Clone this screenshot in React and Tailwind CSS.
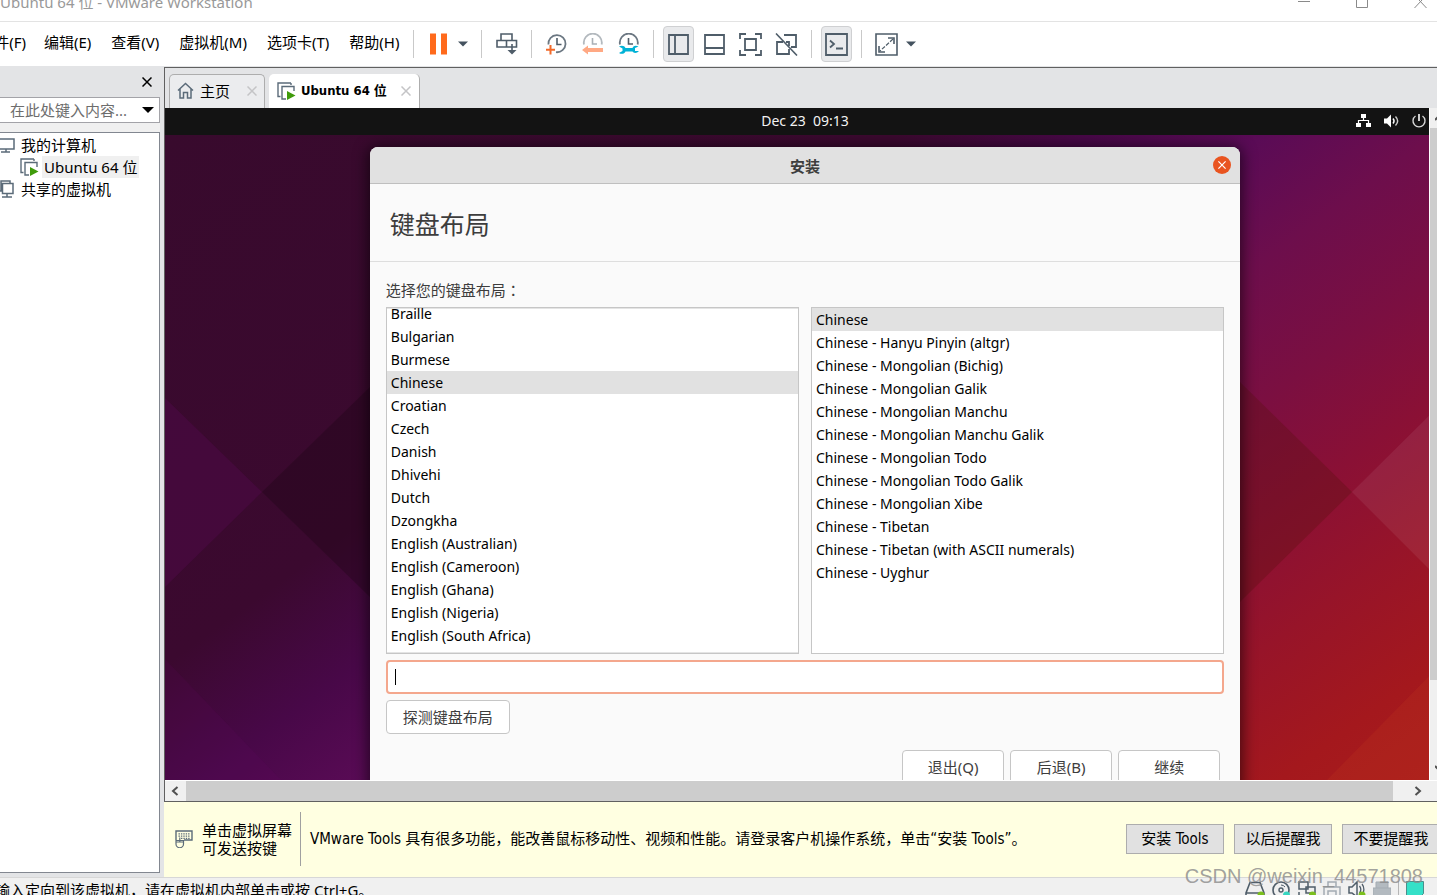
import React from "react";

const INK = "#4f5d69";

function Svg({ w, h, className = "", children }) {
  return (
    <svg width={w} height={h} viewBox={`0 0 ${w} ${h}`} fill="none" className={`shrink-0 ${className}`} aria-hidden="true">
      {children}
    </svg>
  );
}

/* ---------- toolbar icons ---------- */

const PauseIcon = () => (
  <Svg w={17} h={22}>
    <path d="M0 0.500h6v21h-6zM11 0.500h6v21h-6z" fill="#ff6a1c" />
  </Svg>
);

const Caret = () => (
  <Svg w={10} h={6}>
    <path d="M0 0.500h10L5 5.500z" fill="#44525f" />
  </Svg>
);

const SendKeysIcon = () => (
  <Svg w={22} h={22}>
    <path d="M5 7V1h11v6M1 7.500h9.500V14H1zM10.500 7.500H20.500V14h-10zM16 11v9" stroke={INK} strokeWidth="1.600" />
    <path d="M11.500 17L16 21.500L20.500 17z" fill={INK} />
  </Svg>
);

const SnapshotTakeIcon = () => (
  <Svg w={22} h={22}>
    <path d="M2.400 11.500A8.600 8.600 0 1 1 10 19.200" stroke="#6b7782" strokeWidth="1.800" />
    <path d="M11 5v6.500h4.500" stroke={INK} strokeWidth="1.600" />
    <path d="M4.500 12v9.500M0 16.800h9" stroke="#f26a2a" strokeWidth="2" />
  </Svg>
);

const SnapshotRevertIcon = () => (
  <Svg w={22} h={22}>
    <path d="M2 11.500A9 9 0 1 1 19.600 11.500" stroke="#b3b9be" strokeWidth="1.800" />
    <path d="M10.500 5v6h4.500" stroke="#a9b0b6" strokeWidth="1.600" />
    <path d="M0 17l6-4.500v2.500h15v4H6v2.500z" fill="#ffa984" />
  </Svg>
);

const SnapshotManageIcon = () => (
  <Svg w={22} h={22}>
    <path d="M2 11.500A9 9 0 1 1 19.600 11.500" stroke="#6b7782" strokeWidth="1.800" />
    <path d="M10.500 5v6h4.500" stroke={INK} strokeWidth="1.600" />
    <path
      d="M1 13.500c2.500-1.500 5.500-1 6.500 1.500h7c1-2.500 3.500-3 6-1.500l-3.500 1.500v3h4c-2 2.500-5.500 2.500-6.500 0.500h-7c-1 2.500-4 3-6.500 1.500l3.500-2v-2.500z"
      fill="#00b2d6"
    />
  </Svg>
);

const SidebarIcon = () => (
  <Svg w={21} h={21}>
    <path d="M1 1h19v19H1zM7 1v19" stroke={INK} strokeWidth="1.800" />
  </Svg>
);

const ThumbnailIcon = () => (
  <Svg w={21} h={21}>
    <path d="M1 1h19v19H1zM1 14h19" stroke={INK} strokeWidth="1.800" />
  </Svg>
);

const FullScreenIcon = () => (
  <Svg w={23} h={23}>
    <path d="M1 6V1h6M16 1h6v5M22 17v5h-6M7 22H1v-5M6 6h11v11H6z" stroke={INK} strokeWidth="1.800" />
  </Svg>
);

const UnityIcon = () => (
  <Svg w={23} h={23}>
    <path d="M9 2h12v12h-5M8 9H2v12h12v-5M14 13V9h-3" stroke={INK} strokeWidth="1.800" />
    <path d="M1 0.500l21 22" stroke={INK} strokeWidth="1.600" />
  </Svg>
);

const ConsoleIcon = () => (
  <Svg w={23} h={23}>
    <path d="M1 1h21v21H1z" stroke={INK} strokeWidth="1.800" />
    <path d="M5 7.500l4 3.500l-4 3.500M11 15.500h7" stroke={INK} strokeWidth="1.800" />
  </Svg>
);

const StretchIcon = () => (
  <Svg w={23} h={23}>
    <path d="M1 1h21v21H1z" stroke={INK} strokeWidth="1.600" />
    <path d="M13 5h6v6M4 13v6h6" stroke={INK} strokeWidth="1.600" />
    <path d="M18 6L5 18" stroke={INK} strokeWidth="1.200" strokeDasharray="4 1.500" />
  </Svg>
);

/* ---------- library and tab icons ---------- */

const HomeIcon = () => (
  <Svg w={17} h={17}>
    <path d="M1 8.500L8.500 1.500L16 8.500M3 7v9h3.500v-5.500h4V16H14V7" stroke="#5b6b79" strokeWidth="1.500" />
  </Svg>
);

const RunningVmIcon = () => (
  <Svg w={19} h={19}>
    <path d="M3.500 14.500H1V1h13M14 1v2M9 17H5V4.500h12V9" stroke="#5b6b79" strokeWidth="1.400" />
    <path d="M10 9v9l8.500-4.500z" fill="#3f9b0b" />
  </Svg>
);

const ComputerIcon = () => (
  <Svg w={15} h={15}>
    <path d="M-2 1h16v10H-2M6 11v3M1 14h9" stroke="#5b6b79" strokeWidth="1.500" />
  </Svg>
);

const SharedVmIcon = () => (
  <Svg w={15} h={18}>
    <path d="M-2 11h3V1h9v2M2.500 3.500H13v10H2.500zM7 13.500V17M2 17h10" stroke="#5b6b79" strokeWidth="1.500" />
  </Svg>
);

const Cross = ({ color, size = 10 }) => (
  <svg width={size} height={size} viewBox="0 0 10 10" fill="none" aria-hidden="true">
    <path d="M0.500 0.500l9 9M9.500 0.500l-9 9" stroke={color} strokeWidth="1.500" />
  </svg>
);

const Chevron = ({ d, w, h }) => (
  <Svg w={w} h={h}>
    <path d={d} stroke="#505050" strokeWidth="2" />
  </Svg>
);

/* ---------- window chrome ---------- */

function TitleBar() {
  return (
    <header className="flex h-[22px] shrink-0 items-start justify-between overflow-hidden border-b border-[#e3e3e3] bg-white">
      <h1 className="whitespace-nowrap text-[15px] leading-[4px] text-[#999999]">Ubuntu 64 位 - VMware Workstation</h1>
      <div className="flex gap-[46px] pr-[10px]">
        <button aria-label="最小化">
          <Svg w={12} h={10}>
            <path d="M0 1.500h12" stroke="#8a8a8a" />
          </Svg>
        </button>
        <button aria-label="最大化">
          <Svg w={12} h={10}>
            <path d="M0.500 0v7.500h11V0" stroke="#8a8a8a" />
          </Svg>
        </button>
        <button aria-label="关闭">
          <Svg w={13} h={10}>
            <path d="M0.500 8L8 0M12.500 8L5 0" stroke="#8a8a8a" />
          </Svg>
        </button>
      </div>
    </header>
  );
}

const MENUS = ["编辑(E)", "查看(V)", "虚拟机(M)", "选项卡(T)", "帮助(H)"];

const Separator = () => <span className="mx-[9px] h-7 w-px shrink-0 bg-[#c9c9c9]" />;

function Tool({ label, active, children }) {
  return (
    <button
      aria-label={label}
      aria-pressed={active}
      className={
        active
          ? "flex h-9 w-[31px] shrink-0 items-center justify-center rounded-[4px] border border-[#cfd0d2] bg-[#e9eaec]"
          : "flex h-9 w-[31px] shrink-0 items-center justify-center"
      }
    >
      {children}
    </button>
  );
}

const CaretButton = ({ label }) => (
  <button aria-label={label} className="flex h-9 w-[18px] shrink-0 items-center justify-center">
    <Caret />
  </button>
);

function MenuBar() {
  return (
    <div className="flex h-11 shrink-0 items-center bg-white">
      <nav className="flex w-[404px] shrink-0 items-center gap-[18px] pb-1 text-[15px] leading-5 text-black">
        <button className="flex w-[26px] justify-end whitespace-nowrap">件(F)</button>
        <div className="flex gap-5">
          {MENUS.map((m) => (
            <button key={m} className="whitespace-nowrap">
              {m}
            </button>
          ))}
        </div>
      </nav>
      <div className="flex items-center">
        <Separator />
        <Tool label="挂起">
          <PauseIcon />
        </Tool>
        <CaretButton label="电源选项" />
        <Separator />
        <Tool label="发送 Ctrl+Alt+Del">
          <SendKeysIcon />
        </Tool>
        <Separator />
        <div className="flex gap-[5px]">
          <Tool label="拍摄快照">
            <SnapshotTakeIcon />
          </Tool>
          <Tool label="恢复快照">
            <SnapshotRevertIcon />
          </Tool>
          <Tool label="管理快照">
            <SnapshotManageIcon />
          </Tool>
        </div>
        <Separator />
        <div className="flex gap-[5px]">
          <Tool label="显示库" active>
            <SidebarIcon />
          </Tool>
          <Tool label="显示缩略图栏">
            <ThumbnailIcon />
          </Tool>
          <Tool label="全屏">
            <FullScreenIcon />
          </Tool>
          <Tool label="Unity">
            <UnityIcon />
          </Tool>
        </div>
        <Separator />
        <Tool label="控制台视图" active>
          <ConsoleIcon />
        </Tool>
        <Separator />
        <Tool label="自由拉伸">
          <StretchIcon />
        </Tool>
        <CaretButton label="拉伸选项" />
      </div>
    </div>
  );
}

function Library() {
  return (
    <aside className="flex w-[164px] shrink-0 flex-col bg-[#e3e4e6] pr-1 pb-1">
      <div className="flex h-[31px] shrink-0 items-center justify-end pr-2">
        <button aria-label="关闭库">
          <Cross color="#000000" />
        </button>
      </div>
      <div className="flex h-[26px] shrink-0 items-center border border-l-0 border-[#a3a3a8] bg-white">
        <input
          aria-label="搜索"
          placeholder="在此处键入内容..."
          className="min-w-0 flex-1 bg-white pl-[10px] text-[15px] leading-5 outline-none placeholder:text-[#6d6d6d]"
        />
        <button aria-label="搜索选项" className="flex w-[22px] justify-center">
          <Svg w={12} h={6}>
            <path d="M0 0h12L6 6z" fill="#000" />
          </Svg>
        </button>
      </div>
      <div className="h-[9px] shrink-0 bg-[#f0f0f0]" />
      <ul className="flex-1 border border-l-0 border-[#828790] bg-white pt-px text-[15px] leading-[22px] text-black">
        <li className="flex h-[22px] items-center gap-[6px]">
          <ComputerIcon />
          <span>我的计算机</span>
        </li>
        <li className="flex h-[22px] items-center gap-1 pl-5">
          <RunningVmIcon />
          <span className="-ml-px whitespace-nowrap bg-[#f0f0f0] px-[2px]">Ubuntu 64 位</span>
        </li>
        <li className="flex h-[22px] items-center gap-[6px]">
          <SharedVmIcon />
          <span>共享的虚拟机</span>
        </li>
      </ul>
    </aside>
  );
}

function Tabs() {
  return (
    <div className="flex h-10 shrink-0 items-end gap-1 bg-[#e3e4e6] pl-1">
      <div className="flex h-[34px] w-[96px] items-center rounded-t-[5px] border border-b-0 border-[#adadad] bg-[#ebecee] px-[7px] pb-[2px]">
        <HomeIcon />
        <button className="ml-[6px] text-[15px] leading-5">主页</button>
        <button aria-label="关闭主页" className="ml-auto">
          <Cross color="#c4c4c6" />
        </button>
      </div>
      <div className="flex h-[34px] w-[151px] items-center rounded-t-[5px] border-r border-[#adadad] bg-white px-2">
        <RunningVmIcon />
        <button className="ml-[5px] whitespace-nowrap font-['DejaVu_Sans_Condensed','DejaVu_Sans','Noto_Sans_CJK_SC',sans-serif] text-[13px] font-bold leading-5">
          Ubuntu 64 位
        </button>
        <button aria-label="关闭 Ubuntu 64 位" className="ml-auto">
          <Cross color="#c4c4c6" />
        </button>
      </div>
    </div>
  );
}

/* ---------- guest screen ---------- */

function Wallpaper() {
  return (
    <svg className="absolute inset-0 h-full w-full" viewBox="0 0 1280 645" preserveAspectRatio="none" aria-hidden="true">
      <defs>
        <linearGradient id="sky" gradientUnits="userSpaceOnUse" x1="0" y1="0" x2="740" y2="1023">
          <stop offset="0" stopColor="#380a2d" />
          <stop offset="0.340" stopColor="#3b092f" />
          <stop offset="0.430" stopColor="#480848" />
          <stop offset="0.510" stopColor="#5a0b56" />
          <stop offset="0.590" stopColor="#6d0e4c" />
          <stop offset="0.680" stopColor="#7b0f41" />
          <stop offset="0.760" stopColor="#8a1035" />
          <stop offset="0.840" stopColor="#971429" />
          <stop offset="0.930" stopColor="#a4181d" />
          <stop offset="1" stopColor="#a81c1c" />
        </linearGradient>
      </defs>
      <path d="M0 0h1280v645H0z" fill="url(#sky)" />
      <path d="M0 263L97 357L0 452z" fill="#5a0858" fillOpacity="0.320" />
      <path d="M97 357L320 140V574z" fill="#1c0713" fillOpacity="0.350" />
      <path d="M0 524L116 645H0z" fill="#6a0a6a" fillOpacity="0.120" />
      <path d="M1187 357L960 134V580z" fill="#5c1010" fillOpacity="0.350" />
      <path d="M1187 357L1280 265V450z" fill="#ffffff" fillOpacity="0.070" />
      <path d="M1162 645L1280 525V645z" fill="#d04a20" fillOpacity="0.150" />
    </svg>
  );
}

function GuestTopBar() {
  return (
    <div className="grid h-[27px] shrink-0 grid-cols-[1fr_auto_1fr] items-center bg-[#131313] pb-px font-['Noto_Sans',sans-serif] text-[14px] leading-5 text-[#f2f2f2]">
      <span />
      <time className="whitespace-pre">{"Dec 23  09:13"}</time>
      <div className="flex items-center justify-end gap-[13px] pr-[19px]">
        <Svg w={15} h={14}>
          <path d="M5 0h5v4H5zM0 9h5v4H0zM10 9h5v4h-5z" fill="#fff" />
          <path d="M7.500 4v3M2.500 9V6.500h10V9" stroke="#fff" strokeWidth="1.200" />
        </Svg>
        <Svg w={15} h={14}>
          <path d="M0 4.500h3L7 0.500v13L3 9.500H0z" fill="#fff" />
          <path d="M9 4.500c1.300 1.500 1.300 3.500 0 5" stroke="#fff" strokeWidth="1.400" />
          <path d="M11.500 2.500c2.700 2.800 2.700 6.200 0 9" stroke="#ccc" strokeWidth="1.400" />
        </Svg>
        <Svg w={14} h={14}>
          <path d="M3.500 2A6 6 0 1 0 10.500 2" stroke="#d8d8d8" strokeWidth="1.400" />
          <path d="M7 0v7" stroke="#fff" strokeWidth="1.600" />
        </Svg>
      </div>
    </div>
  );
}

const LANGUAGES = [
  "Braille",
  "Bulgarian",
  "Burmese",
  "Chinese",
  "Croatian",
  "Czech",
  "Danish",
  "Dhivehi",
  "Dutch",
  "Dzongkha",
  "English (Australian)",
  "English (Cameroon)",
  "English (Ghana)",
  "English (Nigeria)",
  "English (South Africa)",
  "English (UK)",
];

const VARIANTS = [
  "Chinese",
  "Chinese - Hanyu Pinyin (altgr)",
  "Chinese - Mongolian (Bichig)",
  "Chinese - Mongolian Galik",
  "Chinese - Mongolian Manchu",
  "Chinese - Mongolian Manchu Galik",
  "Chinese - Mongolian Todo",
  "Chinese - Mongolian Todo Galik",
  "Chinese - Mongolian Xibe",
  "Chinese - Tibetan",
  "Chinese - Tibetan (with ASCII numerals)",
  "Chinese - Uyghur",
];

function ListBox({ label, items, scrolled }) {
  return (
    <div
      className={
        scrolled
          ? "h-[347px] flex-1 overflow-hidden border border-[#c6c6c6] bg-white shadow-[inset_0_1px_0_#e4e4e4,inset_0_-1px_0_#e4e4e4]"
          : "h-[347px] flex-1 overflow-hidden border border-[#c6c6c6] bg-white"
      }
    >
      <ul role="listbox" aria-label={label} className={scrolled ? "-mt-[6px]" : ""}>
        {items.map((item) => (
          <li
            key={item}
            role="option"
            aria-selected={item === "Chinese"}
            className={
              item === "Chinese"
                ? "h-[23px] whitespace-nowrap bg-[#e1e1e1] px-1 text-[14px] leading-[23px] text-black"
                : "h-[23px] whitespace-nowrap px-1 text-[14px] leading-[23px] text-black"
            }
          >
            {item}
          </li>
        ))}
      </ul>
    </div>
  );
}

const GtkButton = ({ children, wide }) => (
  <button
    className={
      wide
        ? "h-[34px] w-[124px] rounded-[4px] border border-[#c6c6c6] bg-white text-[15px] text-[#3d3d3d]"
        : "h-[34px] w-[102px] rounded-[4px] border border-[#c6c6c6] bg-white text-[15px] text-[#3d3d3d]"
    }
  >
    {children}
  </button>
);

function Installer() {
  return (
    <section className="relative mx-auto mt-3 w-[68%] rounded-t-lg bg-[#fafafa] text-[#3d3d3d] shadow-[0_2px_14px_3px_rgba(0,0,0,0.55)]">
      <header className="grid h-[37px] grid-cols-[1fr_auto_1fr] items-center rounded-t-lg border-b border-[#bfbfbf] bg-[#e1e1e1] px-[9px]">
        <span />
        <h2 className="pt-px text-[15px] font-bold leading-5">安装</h2>
        <button aria-label="关闭" className="flex size-[18px] items-center justify-center justify-self-end rounded-full bg-[#e95420]">
          <Cross color="#ffffff" size={8} />
        </button>
      </header>
      <h3 className="border-b border-[#dedede] px-5 pt-6 pb-[21px] text-[25px] leading-8">键盘布局</h3>
      <div className="px-4 pt-[18px]">
        <p className="mb-[7px] text-[15px] leading-5">
          选择您的键盘布局<span className="font-['Noto_Sans_CJK_TC',sans-serif]">：</span>
        </p>
        <div className="flex gap-3">
          <ListBox label="键盘布局" items={LANGUAGES} scrolled />
          <ListBox label="键盘布局变体" items={VARIANTS} />
        </div>
        <div className="mt-[6px] flex h-[34px] items-center rounded-[4px] border-2 border-[#f4a78d] bg-white pl-[7px]">
          <span className="h-4 w-px bg-black" />
          <input aria-label="在此处输入以测试您的键盘" className="min-w-0 flex-1 bg-transparent text-[15px] outline-none" />
        </div>
        <div className="mt-[6px]">
          <GtkButton wide>探测键盘布局</GtkButton>
        </div>
        <div className="mt-[16px] flex justify-end gap-[6px] pr-1 pb-4">
          <GtkButton>退出(Q)</GtkButton>
          <GtkButton>后退(B)</GtkButton>
          <GtkButton>继续</GtkButton>
        </div>
      </div>
    </section>
  );
}

function GuestScreen() {
  return (
    <div className="flex min-h-0 flex-1">
      <div className="min-w-0 flex-1 overflow-hidden">
        <div className="-mr-4 flex h-full flex-col">
          <GuestTopBar />
          <div className="relative min-h-0 flex-1 overflow-hidden">
            <Wallpaper />
            <Installer />
          </div>
        </div>
      </div>
      <div className="flex w-2 shrink-0 flex-col overflow-hidden border-l border-white bg-[#f0f0f0]">
        <div className="flex h-5 shrink-0 items-center pl-[5px]">
          <Chevron w={10} h={6} d="M0 5l4-4l4 4" />
        </div>
        <div className="h-[552px] bg-[#cdcdcd]" />
        <div className="mt-auto flex h-6 items-center pl-[5px]">
          <Chevron w={10} h={6} d="M0 1l4 4l4-4" />
        </div>
      </div>
    </div>
  );
}

function HorizontalScroll() {
  return (
    <div className="flex h-[22px] shrink-0 items-stretch border-t border-b border-t-white border-b-[#606060] bg-[#f0f0f0]">
      <button aria-label="向左滚动" className="flex w-[21px] items-center justify-center pr-[2px]">
        <Chevron w={8} h={10} d="M6.500 1l-4.500 4l4.500 4" />
      </button>
      <div className="flex-1 bg-[#cdcdcd]" />
      <button aria-label="向右滚动" className="ml-4 mr-[10px] flex w-[18px] items-center justify-center">
        <Chevron w={8} h={10} d="M1.500 1l4.500 4l-4.500 4" />
      </button>
    </div>
  );
}

const HintButton = ({ children }) => (
  <button className="h-[30px] w-[98px] shrink-0 whitespace-nowrap border border-[#adadad] bg-[#e1e1e1] text-[15px] leading-5 text-black">
    {children}
  </button>
);

function ToolsHint() {
  return (
    <div className="flex h-[75px] shrink-0 items-center overflow-hidden bg-[#ffffe1] pb-[2px] pl-[11px] font-['DejaVu_Sans_Condensed','DejaVu_Sans','Noto_Sans_CJK_SC',sans-serif] text-[15px] text-black">
      <Svg w={18} h={18}>
        <path d="M1 10V1h16v9h-8" stroke="#5b6b79" strokeWidth="1.400" />
        <path d="M3.500 3.800h11M3.500 6.200h11M6 8.400h9" stroke="#5b6b79" strokeWidth="1.300" strokeDasharray="1.400 1" />
        <path d="M1 10.500h7.500v3.500a3.700 3.700 0 0 1-7.500 0zM1 12h7.500M4.800 7.500v4" stroke="#5b6b79" strokeWidth="1.200" fill="#ffffe1" />
      </Svg>
      <p className="ml-[9px] w-[98px] shrink-0 font-['Noto_Sans','Noto_Sans_CJK_SC',sans-serif] leading-[18px]">
        单击虚拟屏幕
        <br />
        可发送按键
      </p>
      <span className="h-[54px] w-px shrink-0 bg-[#a0a0a0]" />
      <p className="ml-[9px] min-w-0 flex-1 whitespace-nowrap leading-5">
        VMware Tools 具有很多功能，能改善鼠标移动性、视频和性能。请登录客户机操作系统，单击“安装 Tools”。
      </p>
      <div className="-mr-[3px] flex gap-[10px]">
        <HintButton>安装 Tools</HintButton>
        <HintButton>以后提醒我</HintButton>
        <HintButton>不要提醒我</HintButton>
      </div>
    </div>
  );
}

function StatusBar() {
  return (
    <footer className="relative flex h-[18px] shrink-0 items-start justify-between border-t border-[#d7d7d7] bg-[#f0f0f0]">
      <div className="flex h-full w-full items-start justify-between overflow-hidden">
        <p className="-ml-[5px] whitespace-nowrap pt-[2px] text-[15px] leading-5 text-black">
          输入定向到该虚拟机，请在虚拟机内部单击或按 Ctrl+G。
        </p>
        <div className="flex shrink-0 gap-[7px] pt-[3px] pr-[13px]">
          <Svg w={20} h={18}>
            <path d="M1 18v-6L5 1.500h10l4 10.500v6M1 12h18" stroke={INK} strokeWidth="1.600" />
            <circle cx="16" cy="14" r="3.500" fill="#7bbf1e" />
          </Svg>
          <Svg w={18} h={18}>
            <circle cx="9" cy="9" r="8" stroke={INK} strokeWidth="1.600" />
            <circle cx="9" cy="9" r="2" stroke={INK} strokeWidth="1.400" />
            <path d="M9 4a5 5 0 0 1 4 2" stroke={INK} />
            <circle cx="14.500" cy="14" r="3.500" fill="#35d6c0" />
          </Svg>
          <Svg w={19} h={18}>
            <path d="M2 1h9v7H2zM9 6h9v6H9zM2 11v4h5" stroke={INK} strokeWidth="1.500" />
            <circle cx="15.500" cy="14" r="3.500" fill="#7bbf1e" />
          </Svg>
          <Svg w={18} h={18}>
            <path d="M5 6V1h8v5M1 14V6h16v8M5 10h8v8H5z" stroke="#a3abb2" strokeWidth="1.500" />
          </Svg>
          <Svg w={18} h={18}>
            <path d="M1 6h3l5-5v15l-5-4H1z" stroke={INK} strokeWidth="1.500" />
            <path d="M11.500 5c1.500 2 1.500 5 0 7M14 3c2.500 3 2.500 8 0 11" stroke={INK} strokeWidth="1.300" />
            <circle cx="14" cy="14" r="3.500" fill="#7bbf1e" />
          </Svg>
          <Svg w={18} h={18}>
            <path d="M3 7V1h12v6M0 7h18v11H0z" stroke="#a3abb2" fill="#b3bac0" />
          </Svg>
          <span className="h-[14px] w-px bg-[#b5b5b5]" />
          <Svg w={18} h={18}>
            <path d="M0.500 0.500h17v12l-5 5h-12z" fill="#35e0c8" stroke="#4a8f8c" />
          </Svg>
        </div>
      </div>
      <span className="absolute right-[14px] -top-[15px] whitespace-nowrap font-['Liberation_Sans',sans-serif] text-[20px] leading-[26px] text-[#8a8a8a]/80">
        CSDN @weixin_44571808
      </span>
    </footer>
  );
}

export default function App() {
  return (
    <div className="flex h-screen flex-col overflow-hidden bg-[#e3e4e6] font-['Noto_Sans','Noto_Sans_CJK_SC',sans-serif]">
      <TitleBar />
      <MenuBar />
      <div className="flex min-h-0 flex-1">
        <Library />
        <main className="flex min-w-0 flex-1 flex-col pt-px">
          <div className="flex min-h-0 flex-1 flex-col border-t border-l border-[#606060]">
            <Tabs />
            <GuestScreen />
            <HorizontalScroll />
          </div>
          <ToolsHint />
        </main>
      </div>
      <StatusBar />
    </div>
  );
}
